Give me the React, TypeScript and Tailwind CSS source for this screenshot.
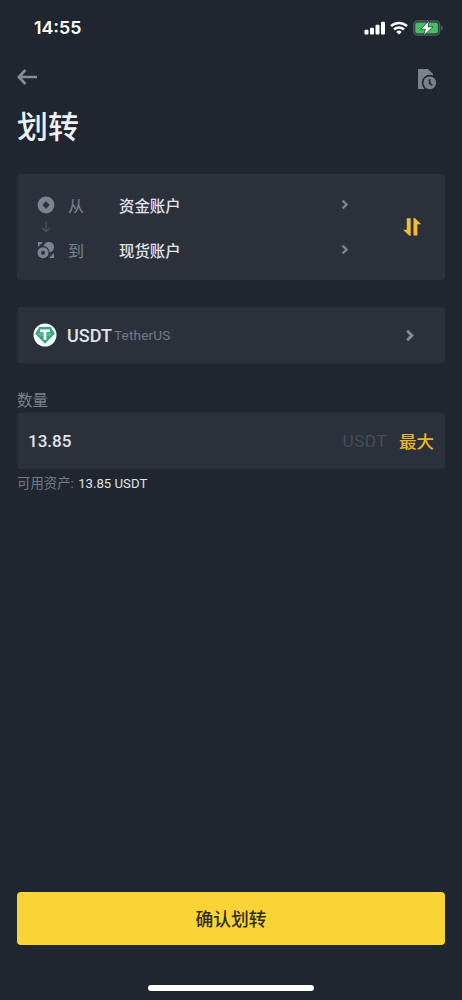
import React from "react";

const Chevron = ({ className }: { className: string }) => (
  <svg viewBox="0 0 10 14" fill="none" stroke="currentColor" strokeWidth="3.1" className={className}>
    <path d="M2 2l5 5-5 5" />
  </svg>
);

const StatusIcons = () => (
  <div className="flex items-center pt-px">
    <svg viewBox="0 0 22 14" className="h-[14px] w-[22px] text-white" fill="currentColor">
      <rect x="0.5" y="8.7" width="4" height="4.8" rx="1" />
      <rect x="6" y="6.7" width="4" height="6.8" rx="1" />
      <rect x="11.5" y="3.8" width="4" height="9.7" rx="1" />
      <rect x="17" y="0.7" width="4" height="12.8" rx="1" />
    </svg>
    <svg viewBox="0 0 18 14" className="ml-[4px] h-[14px] w-[18px]" fill="none" stroke="#fff" strokeWidth="2.5">
      <path d="M1 5.2a11.3 11.3 0 0 1 16 0" />
      <path d="M4 8.5a7.1 7.1 0 0 1 10 0" />
      <path d="M9 13.6l-2.7-2.7a3.9 3.9 0 0 1 5.4 0z" fill="#fff" stroke="none" />
    </svg>
    <svg viewBox="0 0 31 16" className="ml-[5px] h-[16px] w-[31px]">
      <rect x="0.7" y="0.9" width="26" height="14.2" rx="4" fill="none" stroke="#59616a" strokeWidth="1.2" />
      <rect x="2.2" y="2.4" width="23" height="11.2" rx="2.3" fill="#43bd63" />
      <path d="M28.2 5.4c2.1.6 2.1 4.6 0 5.2z" fill="#59616a" />
      <path d="M16.4 0.4L7.7 9.2h4.7l-1.9 6.5L20 6.8h-5z" fill="#fff" stroke="#1f262f" strokeWidth="0.7" />
    </svg>
  </div>
);

const FundingIcon = () => (
  <svg viewBox="0 0 18 18" className="h-[18px] w-[18px]">
    <circle cx="9" cy="9" r="8.4" fill="#7b8290" />
    <path d="M9 5.3L12.7 9 9 12.7 5.3 9z" fill="#2b313b" />
  </svg>
);

const SpotIcon = () => (
  <svg viewBox="0 0 18 18" className="h-[18px] w-[18px]" fill="#7b8290">
    <path d="M1 1h5L1 6z" />
    <circle cx="11.8" cy="6" r="5.3" />
    <circle cx="6" cy="11.7" r="6.6" fill="#2b313b" />
    <circle cx="6" cy="11.7" r="5.5" />
    <circle cx="6" cy="11.7" r="2" fill="#2b313b" />
    <path d="M17 12v5h-5z" />
  </svg>
);

const AccountRow = ({ icon, label, name }: { icon: React.ReactNode; label: string; name: string }) => (
  <div className="flex h-[23px] items-center">
    {icon}
    <span className="ml-[13px] w-[51px] pt-[3px] text-[16px] leading-[23px] text-[#7b8290]">{label}</span>
    <span className="flex-1 pt-[5px] text-[15.4px] leading-[23px] font-medium text-[#e1e4ea]">{name}</span>
    <Chevron className="h-[11px] w-[8px] text-[#7b8290]" />
  </div>
);

export default function App() {
  return (
    <main className="flex h-[1000px] w-[462px] flex-col bg-[#1f262f] px-[17px] font-['Roboto','Noto_Sans_CJK_SC',sans-serif]">
      <div className="flex h-[54px] items-center justify-between pl-[17px] pr-[1px]">
        <span className="pt-[2px] font-['Inter',sans-serif] text-[17.8px] font-semibold leading-[22px] text-white">14:55</span>
        <StatusIcons />
      </div>

      <header className="flex h-[49px] items-center justify-between pr-[8px]">
        <svg viewBox="0 0 22 18" className="mb-[4px] h-[18px] w-[22px]" fill="none" stroke="#858b97" strokeWidth="2.7">
          <path d="M20 9H2M8.5 2L1.8 9l6.7 7" />
        </svg>
        <svg viewBox="0 0 20 22" className="h-[22px] w-[20px]">
          <path d="M1 1h10l5 5v15H1z" fill="#7b818b" />
          <circle cx="12.8" cy="14.8" r="8" fill="#1f262f" />
          <circle cx="12.8" cy="14.8" r="6.4" fill="#7b818b" />
          <path d="M12.6 11v4.1l2.8 2.2" fill="none" stroke="#1f262f" strokeWidth="1.7" />
        </svg>
      </header>

      <h1 className="h-[71px] pt-[2px] text-[31px] font-medium leading-[45px] text-[#eef1f5]">划转</h1>

      <section className="flex h-[106px] items-center rounded-[4px] bg-[#2b313b] pl-[20px] pr-[23px]">
        <div className="w-[312px]">
          <AccountRow icon={<FundingIcon />} label="从" name="资金账户" />
          <div className="flex h-[22px] w-[18px] items-center justify-center">
            <svg viewBox="0 0 10 12" className="h-[12px] w-[10px]" fill="none" stroke="#4b525e" strokeWidth="1.3">
              <path d="M5 0.5v10M1 6.6l4 4 4-4" />
            </svg>
          </div>
          <AccountRow icon={<SpotIcon />} label="到" name="现货账户" />
        </div>
        <svg viewBox="0 0 20 20" className="ml-auto h-[20px] w-[20px]" fill="#f0bd32">
          <path d="M4.8 1.2h3.9v17.6H7.4L1 12.8h3.8z" />
          <path d="M15.4 18.6h-3.9V1h1.3l6.4 6.2h-3.8z" />
        </svg>
      </section>

      <section className="mt-[27px] flex h-[56px] items-center rounded-[4px] bg-[#2b313b] pl-[16px] pr-[30px]">
        <svg viewBox="0 0 24 24" className="h-[24px] w-[24px]">
          <circle cx="12" cy="12" r="11.5" fill="#f4fbf8" />
          <path d="M6.2 4h11.6l4 6.8L12 20.8 2.2 10.8z" fill="#39a684" />
          <path d="M7 6.4h10v2.5h-3.7v7.8h-2.6V8.9H7z" fill="#fff" />
          <path d="M10.7 10c-6.2.2-6.2 2.2 0 2.4M13.3 10c6.2.2 6.2 2.2 0 2.4" fill="none" stroke="#a9d8c8" strokeWidth="0.6" />
        </svg>
        <span className="ml-[10px] pt-px text-[18px] font-medium leading-[24px] text-[#e1e4ea]">USDT</span>
        <span className="ml-[2px] text-[13.5px] leading-[24px] tracking-[0.2px] text-[#737985]">TetherUS</span>
        <Chevron className="ml-auto h-[13px] w-[10px] text-[#858b97]" />
      </section>

      <div className="mt-[25px] h-[25px] pt-[2px] text-[15.5px] leading-[22px] text-[#7b818c]">数量</div>
      <section className="flex h-[56px] items-center rounded-[4px] bg-[#2b313b] pl-[11px] pr-[11px]">
        <span className="flex-1 text-[17px] font-medium leading-[24px] text-[#e1e4ea]">13.85</span>
        <span className="text-[17.3px] leading-[24px] tracking-[0.4px] text-[#464c57]">USDT</span>
        <button className="ml-[12px] pt-[2px] text-[17.5px] font-medium leading-[24px] text-[#e9b62e]">最大</button>
      </section>
      <div className="mt-[5px] flex h-[20px] items-center whitespace-pre text-[13.4px] leading-[20px] text-[#737985]">
        <span>可用资产: </span>
        <span className="ml-px text-[13.2px] text-[#e0e3e8]">13.85 USDT</span>
      </div>

      <button className="mt-auto h-[53px] rounded-[4px] bg-[#fad435] pt-[2px] text-[17.8px] font-medium leading-[26px] text-[#302c1d]">
        确认划转
      </button>
      <div className="mt-[40px] mb-[9px] h-[6px] w-[166px] shrink-0 self-center rounded-full bg-white" />
    </main>
  );
}
